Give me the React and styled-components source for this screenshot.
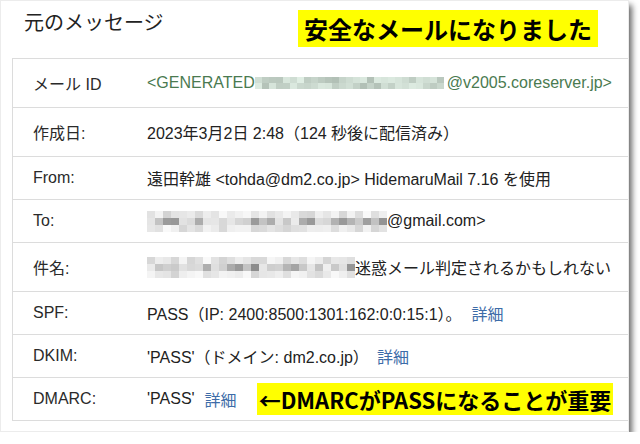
import React from "react";
import styled, { createGlobalStyle } from "styled-components";

const Global = createGlobalStyle`
  html, body { margin: 0; padding: 0; background: #ffffff; }
  body { font-family: "Liberation Sans", "Noto Sans CJK JP", sans-serif; }
`;

const Shot = styled.div`
  box-sizing: border-box;
  width: 629px;
  height: 432px;
  border: 1px solid #ececec;
  background: #fff;
  box-shadow: 3px 5px 6px rgba(0, 0, 0, 0.6);
  overflow: hidden;
  padding-left: 11px;
`;

const Header = styled.div`
  display: flex;
  align-items: flex-start;
  height: 57px;
  padding-top: 9px;
  box-sizing: border-box;
`;

const Title = styled.h1`
  margin: 0 0 0 12px;
  font-family: "Noto Sans CJK JP", sans-serif;
  font-size: 20px;
  line-height: 24px;
  font-weight: 400;
  color: #222;
`;

const Highlight = styled.div`
  background: #ffff00;
  color: #000;
  font-family: "Noto Sans CJK JP", sans-serif;
  font-weight: 700;
  font-size: ${(p) => p.$size}px;
  line-height: ${(p) => p.$h}px;
  padding: 0 ${(p) => p.$pad}px;
  margin-left: ${(p) => p.$ml};
  margin-right: ${(p) => p.$mr}px;
  white-space: nowrap;
`;

const Table = styled.div`
  width: 640px;
  border-left: 1px solid #dcdcdc;
  border-top: 1px solid #dcdcdc;
`;

const Row = styled.div`
  display: grid;
  grid-template-columns: 114px 1fr;
  align-items: center;
  height: ${(p) => p.$h}px;
  box-sizing: border-box;
  border-bottom: 1px solid #dcdcdc;
  padding-left: 20px;
  font-size: 16px;
  color: #222;
  white-space: nowrap;
`;

const Label = styled.div`
  color: #2a2a2a;
`;

const Value = styled.div`
  display: flex;
  align-items: center;
  color: ${(p) => (p.$green ? "#4a7a50" : "#222")};
`;

const Link = styled.span`
  color: #3d6ca8;
  margin-left: ${(p) => p.$ml}px;
`;

const MosaicWrap = styled.span`
  display: inline-grid;
  grid-auto-flow: column;
  grid-template-rows: repeat(${(p) => p.$rows}, ${(p) => p.$ch}px);
  grid-auto-columns: ${(p) => p.$cw}px;
  margin-right: ${(p) => p.$mr}px;
`;

function rnd(seed) {
  let s = seed;
  return () => {
    s = (s * 9301 + 49297) % 233280;
    return s / 233280;
  };
}

function Mosaic({ width, rows, cw, ch, seed, tint, mr = 0 }) {
  const r = rnd(seed);
  const cols = Math.round(width / cw);
  const cells = [];
  for (let c = 0; c < cols; c++) {
    for (let y = 0; y < rows; y++) {
      const v = r();
      let color;
      if (tint === "green") {
        const l = Math.round(190 + v * 50);
        color = `rgb(${l - 14},${l},${l - 10})`;
      } else {
        const edge = y === 0 || y === rows - 1;
        const base = edge ? 210 : 140;
        const l = Math.round(base + v * (edge ? 40 : 100));
        color = `rgb(${l},${l},${l})`;
      }
      cells.push(<span key={c + "-" + y} style={{ background: color }} />);
    }
  }
  return (
    <MosaicWrap $rows={rows} $cw={cw} $ch={ch} $mr={mr}>
      {cells}
    </MosaicWrap>
  );
}

export default function App() {
  return (
    <>
      <Global />
      <Shot>
        <Header>
          <Title>元のメッセージ</Title>
          <Highlight $size={24} $h={37} $pad={6} $ml="auto" $mr={30}>
            安全なメールになりました
          </Highlight>
        </Header>
        <Table>
          <Row $h={49}>
            <Label>メール ID</Label>
            <Value $green>
              &lt;GENERATED
              <Mosaic width={189} rows={2} cw={7} ch={6} seed={11} tint="green" mr={3} />
              @v2005.coreserver.jp&gt;
            </Value>
          </Row>
          <Row $h={49}>
            <Label>作成日:</Label>
            <Value>2023年3月2日 2:48（124 秒後に配信済み）</Value>
          </Row>
          <Row $h={43}>
            <Label>From:</Label>
            <Value>遠田幹雄 &lt;tohda@dm2.co.jp&gt; HidemaruMail 7.16 を使用</Value>
          </Row>
          <Row $h={43}>
            <Label>To:</Label>
            <Value>
              <Mosaic width={243} rows={3} cw={8} ch={7} seed={5} />
              @gmail.com&gt;
            </Value>
          </Row>
          <Row $h={49}>
            <Label>件名:</Label>
            <Value>
              <Mosaic width={210} rows={3} cw={8} ch={7} seed={23} />
              迷惑メール判定されるかもしれない
            </Value>
          </Row>
          <Row $h={43}>
            <Label>SPF:</Label>
            <Value>
              PASS（IP: 2400:8500:1301:162:0:0:15:1）。
              <Link $ml={10}>詳細</Link>
            </Value>
          </Row>
          <Row $h={43}>
            <Label>DKIM:</Label>
            <Value>
              'PASS'（ドメイン: dm2.co.jp）
              <Link $ml={8}>詳細</Link>
            </Value>
          </Row>
          <Row $h={43}>
            <Label>DMARC:</Label>
            <Value>
              'PASS'
              <Link $ml={10}>詳細</Link>
              <Highlight $size={22} $h={32} $pad={2} $ml="20px" $mr={0}>
                ←DMARCがPASSになることが重要
              </Highlight>
            </Value>
          </Row>
        </Table>
      </Shot>
    </>
  );
}
